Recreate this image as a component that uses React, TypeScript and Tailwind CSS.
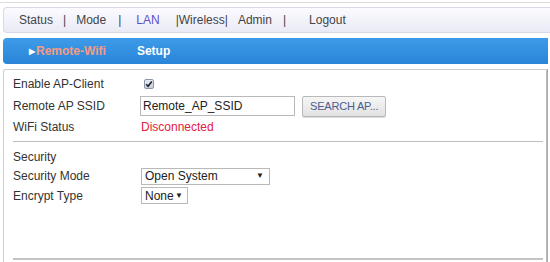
import React from "react";

export default function App() {
  const font = { fontFamily: '"Liberation Sans", Arial, sans-serif' };
  return (
    <div className="w-[550px] h-[262px] bg-white overflow-hidden text-[12px] text-[#333]" style={font}>
      <div className="h-[3px] border-b border-[#dcdcdc]" />
      <div className="mt-[4px] ml-[3px] h-[26px] rounded-l-[4px] border border-r-0 border-[#d8d8e6] bg-gradient-to-b from-[#fbfbff] to-[#eaeaf6] flex items-center text-[#444] text-[12px]">
        <span className="ml-[15px]">Status</span>
        <span className="ml-[10px]">|</span>
        <span className="ml-[10px]">Mode</span>
        <span className="ml-[12px]">|</span>
        <span className="ml-[15px] text-[#5c52c8]">LAN</span>
        <span className="ml-[16px]">|Wireless|</span>
        <span className="ml-[10px]">Admin</span>
        <span className="ml-[11px]">|</span>
        <span className="ml-[23px]">Logout</span>
      </div>
      <div className="mt-[5px] ml-[3px] mr-[2px] h-[26px] rounded-l-[4px] bg-gradient-to-b from-[#3d9cea] to-[#2a84d8] flex items-center font-bold text-[12px]">
        <span className="ml-[26px] text-[#f59b82]">
          <span className="text-white text-[8px] mr-[1px] relative top-[-1px]">▶</span>Remote-Wifi
        </span>
        <span className="ml-[31px] text-white">Setup</span>
      </div>
      <div className="mt-[5px] ml-[3px] mr-[3px] h-[200px] border border-[#cfcfcf] border-r-[#bbb] border-b-0 rounded-tl-[3px] shadow-[1px_0_0_#7fb7e6] pl-[9px] pr-[3px] pt-[4px]">
        <div className="flex items-center h-[20px]">
          <span className="w-[127px]">Enable AP-Client</span>
          <span className="ml-[4px] w-[10px] h-[10px] rounded-[2px] border border-[#8b94ad] bg-gradient-to-b from-[#e9ecf6] to-[#c6cde0] flex items-center justify-center">
            <svg width="8" height="8" viewBox="0 0 8 8"><path d="M1.2 4.2 L3.1 6.2 L6.8 1.4" stroke="#222" strokeWidth="1.6" fill="none" /></svg>
          </span>
        </div>
        <div className="flex items-center h-[22px] mt-[1px]">
          <span className="w-[127px]">Remote AP SSID</span>
          <div className="w-[155px] h-[20px] border border-[#b9b9b9] flex items-center pl-[2px] text-[#222]">Remote_AP_SSID</div>
          <button className="ml-[7px] h-[21px] px-[7px] border border-[#b8b8b8] rounded-[2px] bg-gradient-to-b from-[#f6f6f6] to-[#e2e2e2] text-[#4b5c8e] text-[11px] tracking-[-0.2px] shadow-[0_1px_0_#ddd]" style={font}>
            SEARCH AP...
          </button>
        </div>
        <div className="flex items-center h-[20px]">
          <span className="w-[128px]">WiFi Status</span>
          <span className="text-[#e4203c]">Disconnected</span>
        </div>
        <div className="mt-[4px] border-t border-[#bdbdbd]" />
        <div className="h-[20px] mt-[5px] flex items-center">Security</div>
        <div className="flex items-center h-[18px]">
          <span className="w-[128px]">Security Mode</span>
          <div className="w-[129px] h-[17px] border border-[#b9b9b9] flex items-center justify-between pl-[3px] pr-[5px] text-[#222]">
            <span>Open System</span>
            <span className="text-[8px]">▼</span>
          </div>
        </div>
        <div className="flex items-center h-[17px] mt-[2px]">
          <span className="w-[128px]">Encrypt Type</span>
          <div className="w-[47px] h-[17px] border border-[#b9b9b9] flex items-center justify-between pl-[3px] pr-[4px] text-[#222]">
            <span>None</span>
            <span className="text-[8px]">▼</span>
          </div>
        </div>
        <div className="mt-[54px] border-t-2 border-[#c4c4c4]" />
      </div>
    </div>
  );
}
